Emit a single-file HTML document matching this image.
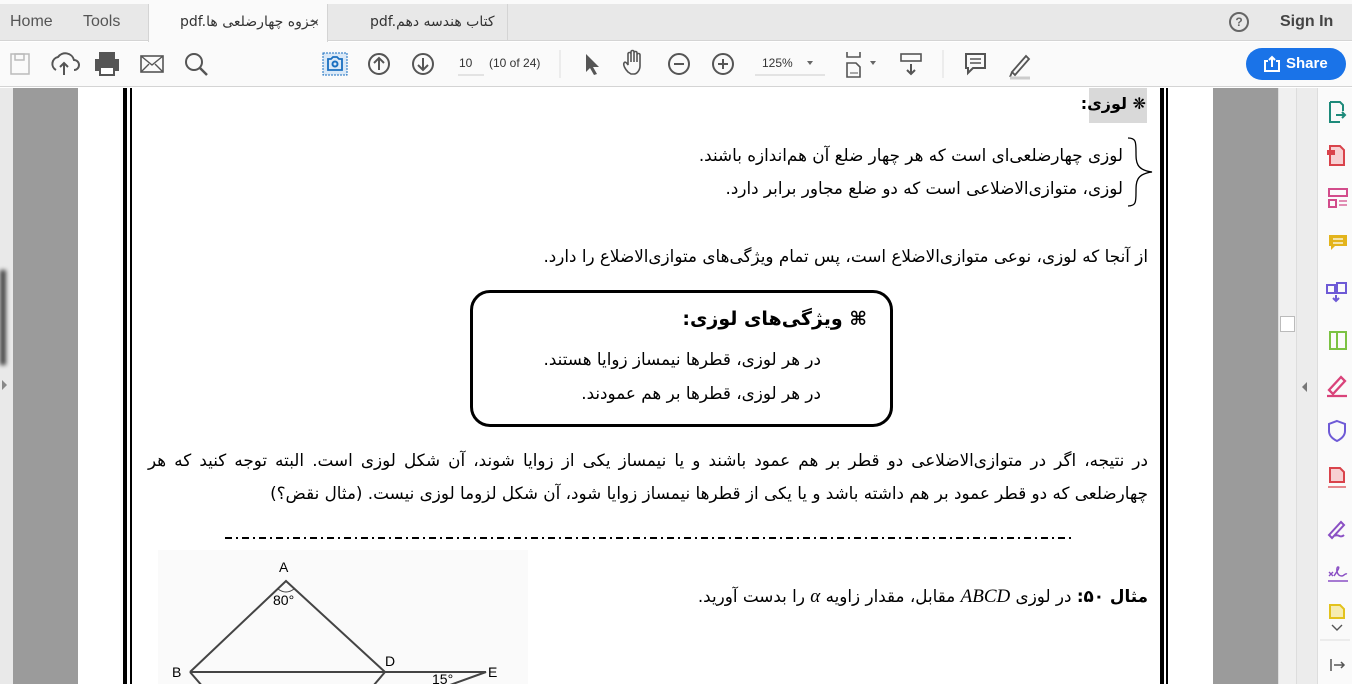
<!DOCTYPE html>
<html><head><meta charset="utf-8">
<style>
*{margin:0;padding:0;box-sizing:border-box}
html,body{width:1352px;height:684px;overflow:hidden}
body{position:relative;background:#fff;font-family:"Liberation Sans","DejaVu Sans",sans-serif}
.abs{position:absolute}
.fa{font-family:"DejaVu Sans",sans-serif;direction:rtl;white-space:nowrap;font-size:16.8px;color:#000;position:absolute}
.tab{position:absolute;top:5px;height:36px;font-size:16px;color:#555;line-height:34px}
</style></head><body>
<div class="abs" style="left:0;top:0;width:1352px;height:41px;background:#e8e8e8;border-top:4px solid #fafafa;border-bottom:1px solid #d4d4d4"></div>
<div class="tab" style="left:10px">Home</div>
<div class="tab" style="left:83px">Tools</div>
<div class="abs" style="left:148px;top:4px;width:180px;height:38px;background:#fafafa;border-left:1px solid #d4d4d4;border-right:1px solid #d4d4d4"></div>
<div class="tab" style="left:180px;font-size:14px;color:#333;font-family:'DejaVu Sans',sans-serif">pdf.جزوه چهارضلعی ها</div>
<div class="tab" style="left:311px;font-size:14px;color:#555">×</div>
<div class="abs" style="left:328px;top:4px;width:180px;height:37px;border-right:1px solid #d4d4d4"></div>
<div class="tab" style="left:370px;font-size:14px;color:#333;font-family:'DejaVu Sans',sans-serif">pdf.کتاب هندسه دهم</div>
<div class="abs" style="left:1229px;top:12px;width:20px;height:20px;border:2px solid #666;border-radius:50%;font-size:12px;text-align:center;line-height:16px;color:#666;font-weight:bold">?</div>
<div class="tab" style="left:1280px;color:#444;font-weight:bold;font-size:16px">Sign In</div>
<div class="abs" style="left:0;top:42px;width:1352px;height:45px;background:#fafafa;border-bottom:1px solid #d4d4d4"></div>
<svg class="abs" style="left:0;top:42px" width="1352" height="45" fill="none" stroke="#555" stroke-width="2">
 <rect x="11" y="12" width="18" height="20" stroke="#bbb" stroke-width="1.5"/><rect x="15" y="12" width="9" height="6" stroke="#bbb" stroke-width="1.5"/>
 <path d="M56 28a7 7 0 0 1 2-13a9 9 0 0 1 16 3a5 5 0 0 1 0 10M64 33v-12m-4 4l4-4l4 4"/>
 <rect x="96" y="18" width="22" height="10" fill="#555"/><rect x="100" y="11" width="14" height="6" fill="#555"/><rect x="100" y="25" width="14" height="8" fill="#fff"/>
 <rect x="141" y="14" width="22" height="16" stroke-width="1.6"/><path d="M141 14l11 9l11-9M141 30l8-8M163 30l-8-8" stroke-width="1.4"/>
 <circle cx="194" cy="20" r="8"/><path d="M200 26l7 7" stroke-width="2.5"/>
 <rect x="323" y="11" width="24" height="22" stroke="#1a6fc0" stroke-dasharray="2 1" stroke-width="1" fill="#dbe9f7"/><path d="M328 17h3l2-2h4l2 2h3v11h-14z" stroke="#1a6fc0" stroke-width="1.8"/><circle cx="335" cy="22" r="2.5" stroke="#1a6fc0"/>
 <circle cx="379" cy="22" r="10"/><path d="M379 28v-12m-5 5l5-5l5 5"/>
 <circle cx="423" cy="22" r="10"/><path d="M423 16v12m-5-5l5 5l5-5"/>
 <path d="M458 33h26" stroke="#ccc" stroke-width="1"/>
 <path d="M560 8v28" stroke="#ddd" stroke-width="1"/>
 <path d="M586 12l0 18l4-4l4 7l3-1l-4-7l6 0z" fill="#555" stroke="none"/>
 <path d="M628 30c-3-3-5-7-4-9s3 0 4 2v-11c0-2 3-2 3 0v8v-10c0-2 3-2 3 0v10v-9c0-2 3-2 3 0v9v-7c0-2 3-2 3 0v11c0 4-3 8-6 8h-3z" stroke-width="1.6"/>
 <circle cx="679" cy="22" r="10"/><path d="M674 22h10"/>
 <circle cx="723" cy="22" r="10"/><path d="M718 22h10M723 17v10"/>
 <path d="M755 33h70" stroke="#ccc" stroke-width="1"/><path d="M807 19l3 4l3-4z" fill="#666" stroke="none"/>
 <path d="M847 10v5h13v-5M847 35v-14h9l4 4v10z" stroke-width="1.6"/><path d="M850 31h8" stroke-width="1"/><path d="M870 19l3 4l3-4z" fill="#666" stroke="none"/>
 <rect x="901" y="12" width="20" height="7" stroke-width="1.6"/><path d="M911 22v10m-4-4l4 4l4-4"/>
 <path d="M943 8v28" stroke="#ddd" stroke-width="1"/>
 <path d="M966 12h19v14h-12l-5 5v-5h-2z"/><path d="M970 17h11M970 21h11" stroke-width="1.5"/>
 <path d="M1012 30l14-16l3 3l-14 16zm0 0l-2 5" stroke-width="1.8"/><path d="M1010 36h20" stroke="#ccc" stroke-width="3"/>
</svg>
<div class="abs" style="left:459px;top:56px;font-size:12px;color:#333">10</div>
<div class="abs" style="left:489px;top:56px;font-size:12px;color:#333">(10 of 24)</div>
<div class="abs" style="left:762px;top:56px;font-size:12px;color:#333">125%</div>
<div class="abs" style="left:1246px;top:48px;width:100px;height:32px;background:#1a73e8;border-radius:16px;color:#fff;font-weight:bold;font-size:15px;line-height:32px;padding-left:40px">Share</div>
<svg class="abs" style="left:1263px;top:55px" width="18" height="18" fill="none" stroke="#fff" stroke-width="2"><path d="M5 6H2v10h14V6h-3M9 12V2M6 5l3-3l3 3"/></svg>
<div class="abs" style="left:0;top:88px;width:13px;height:596px;background:#e9e9e9"></div>
<div class="abs" style="left:0;top:270px;width:6px;height:95px;background:#444;filter:blur(2px)"></div>
<div class="abs" style="left:2px;top:380px;width:0;height:0;border-left:5px solid #888;border-top:5px solid transparent;border-bottom:5px solid transparent"></div>
<div class="abs" style="left:13px;top:88px;width:65px;height:596px;background:#9b9b9b"></div>
<div class="abs" style="left:1213px;top:88px;width:65px;height:596px;background:#9b9b9b"></div>
<div class="abs" style="left:1278px;top:88px;width:18px;height:596px;background:#f0f0f0;border-left:1px solid #ddd"></div>
<div class="abs" style="left:1280px;top:316px;width:15px;height:16px;background:#fff;border:1px solid #bbb"></div>
<div class="abs" style="left:1296px;top:88px;width:22px;height:596px;background:#ececec;border-left:1px solid #ddd;border-right:1px solid #ddd"></div>
<div class="abs" style="left:1302px;top:382px;border-right:5px solid #777;border-top:5px solid transparent;border-bottom:5px solid transparent"></div>
<div class="abs" style="left:1318px;top:88px;width:34px;height:596px;background:#fafafa"></div>
<svg class="abs" style="left:1318px;top:88px" width="34" height="596" fill="none" stroke-width="2">
 <path d="M12 14h10l3 3v6M12 14v20h10" stroke="#1d8a7a"/><path d="M18 27h9m-3-3l3 3l-3 3" stroke="#1d8a7a"/>
 <path d="M12 58h10l4 4v15h-14z" stroke="#d9434b" fill="#f7d0d2"/><rect x="9" y="62" width="8" height="5" fill="#d9434b" stroke="none"/>
 <rect x="11" y="101" width="18" height="7" stroke="#d24c8b"/><rect x="11" y="112" width="7" height="7" stroke="#d24c8b"/><path d="M21 113h8M21 117h8" stroke="#d24c8b" stroke-width="1.3"/>
 <path d="M11 147h18v11h-12l-4 4v-4h-2z" fill="#e3b41c" stroke="none"/><path d="M15 151h10M15 155h10" stroke="#fff" stroke-width="1.3"/>
 <path d="M9 197h8v8h-8zM19 195h9v10h-9zM18 207v6m-3-3l3 3l3-3" stroke="#6e5ad6"/>
 <rect x="12" y="244" width="16" height="17" stroke="#7bc243"/><path d="M19 244v17" stroke="#7bc243"/>
 <path d="M11 302l12-13l4 4l-12 13zM9 308h20" stroke="#d9437a" stroke-width="2.3"/>
 <path d="M19 333l8 3v7c0 5-4 8-8 10c-4-2-8-5-8-10v-7z" stroke="#6e5ad6"/>
 <path d="M12 380h10l4 4v10h-14z" stroke="#d9434b" fill="#f7d0d2"/><path d="M10 399h18" stroke="#d9434b" stroke-width="1.3"/>
 <path d="M11 447l12-13l3 3l-12 13zM17 448c3-3 5 3 9-1" stroke="#8a4fc4"/>
 <path d="M11 484l4 4m0-4l-4 4M16 488c4-6 6-9 4-9c-2 0-2 9 4 9c2 0 3-3 5-2M10 493h20" stroke="#8a4fc4" stroke-width="1.4"/>
 <path d="M12 517h10l4 4v9h-14z" stroke="#e3c21c" fill="#f6ecb0"/>
 <path d="M14 537l5 5l5-5" stroke="#555" stroke-width="1.4"/>
 <path d="M2 552h30" stroke="#ddd" stroke-width="1"/>
 <path d="M13 571v12M16 577h10m-3-3l3 3l-3 3" stroke="#555" stroke-width="1.5"/>
</svg>
<div class="abs" style="left:78px;top:88px;width:1135px;height:596px;background:#fff"></div>
<div class="abs" style="left:123px;top:88px;width:4px;height:596px;background:#000"></div>
<div class="abs" style="left:130px;top:88px;width:2px;height:596px;background:#000"></div>
<div class="abs" style="left:1160px;top:88px;width:4px;height:596px;background:#000"></div>
<div class="abs" style="left:1166px;top:88px;width:2px;height:596px;background:#000"></div>
<div class="abs" style="left:1089px;top:88px;width:58px;height:35px;background:#d9d9d9"></div>
<div class="fa" style="right:206px;top:94px;font-weight:bold;font-size:16px">❋ لوزی:</div>
<svg class="abs" style="left:1120px;top:136px" width="36" height="72" fill="none" stroke="#000" stroke-width="1.3"><path d="M8 2c8 0 8 4 8 14s0 18 16 20c-16 2-16 10-16 20s0 14-8 14"/></svg>
<div class="fa" style="right:229px;top:145px">لوزی چهارضلعی‌ای است که هر چهار ضلع آن هم‌اندازه باشند.</div>
<div class="fa" style="right:229px;top:178px">لوزی، متوازی‌الاضلاعی است که دو ضلع مجاور برابر دارد.</div>
<div class="fa" style="right:204px;top:246px">از آنجا که لوزی، نوعی متوازی‌الاضلاع است، پس تمام ویژگی‌های متوازی‌الاضلاع را دارد.</div>
<div class="abs" style="left:470px;top:290px;width:423px;height:137px;border:3px solid #000;border-radius:20px"></div>
<div class="fa" style="right:485px;top:308px;font-weight:bold;font-size:19px">⌘ ویژگی‌های لوزی:</div>
<div class="fa" style="right:531px;top:349px">در هر لوزی، قطرها نیمساز زوایا هستند.</div>
<div class="fa" style="right:531px;top:383px">در هر لوزی، قطرها بر هم عمودند.</div>
<div class="fa" style="right:204px;top:450px;width:1000px;white-space:normal;text-align:justify;text-align-last:justify">در نتیجه، اگر در متوازی‌الاضلاعی دو قطر بر هم عمود باشند و یا نیمساز یکی از زوایا شوند، آن شکل لوزی است. البته توجه کنید که هر</div>
<div class="fa" style="right:204px;top:483px">چهارضلعی که دو قطر عمود بر هم داشته باشد و یا یکی از قطرها نیمساز زوایا شود، آن شکل لزوما لوزی نیست. (مثال نقض؟)</div>
<svg class="abs" style="left:225px;top:536px" width="848" height="4"><line x1="0" y1="2" x2="848" y2="2" stroke="#000" stroke-width="2" stroke-dasharray="7 4 2 4"/></svg>
<div class="fa" style="right:204px;top:586px"><b>مثال ۵۰:</b> در لوزی <i style="font-family:'Liberation Serif',serif;font-size:19px">ABCD</i> مقابل، مقدار زاویه <i style="font-family:'Liberation Serif',serif;font-size:19px">α</i> را بدست آورید.</div>
<svg class="abs" style="left:150px;top:545px" width="380" height="139" font-family="Liberation Sans" font-size="14">
 <rect x="8" y="5" width="370" height="134" fill="#fafafa"/>
 <path d="M40 127L136 36L235 127L190 180M40 127L60 150M40 127H336L300 140" stroke="#444" stroke-width="2" fill="none"/>
 <path d="M128 44q8 6 16 0" stroke="#444" fill="none"/>
 <text x="129" y="27">A</text><text x="123" y="60">80°</text>
 <text x="22" y="132">B</text><text x="235" y="121">D</text><text x="338" y="132">E</text><text x="282" y="139">15°</text>
</svg>
</body></html>
